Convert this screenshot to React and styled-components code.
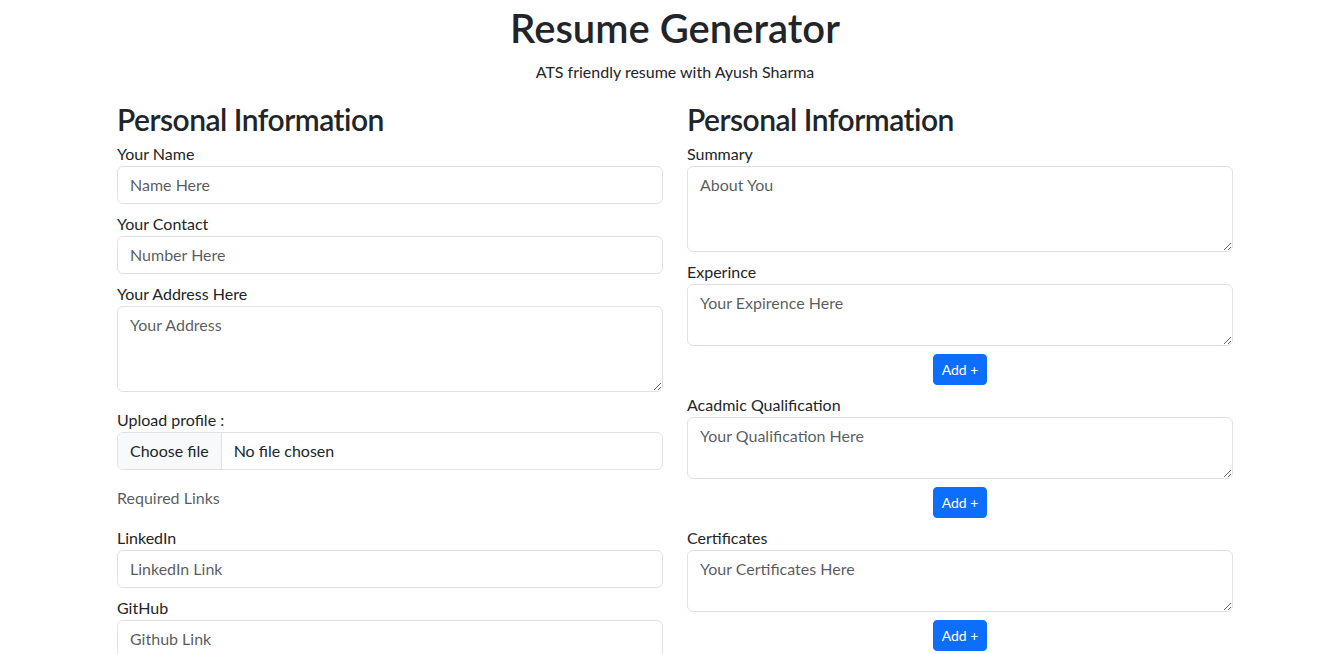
import React from 'react';
import styled, { createGlobalStyle } from 'styled-components';

const GlobalStyle = createGlobalStyle`
  body {
    margin: 0;
    background: #fff;
    color: #212529;
    font-family: "Segoe UI", Lato, "Open Sans", sans-serif;
    font-size: 16px;
    line-height: 1.5;
  }
  * { box-sizing: border-box; }
`;

const Container = styled.div`
  width: 1122px;
  margin: 0 auto;
  padding: 4px 0 0 6px;
`;

const Header = styled.header`
  text-align: center;
`;

const Title = styled.h1`
  margin: 0 0 8px;
  font-size: 40px;
  font-weight: 600;
  line-height: 1.2;
`;

const Subtitle = styled.p`
  margin: 0 0 16px;
`;

const Columns = styled.div`
  display: grid;
  grid-template-columns: 1fr 1fr;
  column-gap: 24px;
`;

const Column = styled.section`
  display: flex;
  flex-direction: column;
`;

const SectionTitle = styled.h2`
  margin: 0 0 4px;
  font-size: 30px;
  font-weight: 600;
  line-height: 38.4px;
  letter-spacing: -0.5px;
`;

const Field = styled.div`
  display: flex;
  flex-direction: column;
  margin-bottom: ${p => p.$gap || 8}px;
`;

const Label = styled.label`
  display: block;
`;

const Input = styled.input`
  display: block;
  width: 100%;
  padding: 6px 12px;
  font: inherit;
  color: #212529;
  border: 1px solid #dee2e6;
  border-radius: 6px;
  background: #fff;
  outline: none;
  &::placeholder { color: rgba(33, 37, 41, 0.75); }
`;

const TextArea = styled.textarea`
  display: block;
  width: 100%;
  padding: 6px 12px;
  font: inherit;
  color: #212529;
  border: 1px solid #dee2e6;
  border-radius: 6px;
  background: #fff;
  outline: none;
  resize: vertical;
  &::placeholder { color: rgba(33, 37, 41, 0.75); }
`;

const FileBox = styled.label`
  display: flex;
  align-items: stretch;
  height: 38px;
  border: 1px solid #dee2e6;
  border-radius: 6px;
  overflow: hidden;
  input { display: none; }
`;

const FileButton = styled.span`
  display: flex;
  align-items: center;
  padding: 0 12px;
  background: #f8f9fa;
  border-right: 1px solid #dee2e6;
`;

const FileName = styled.span`
  display: flex;
  align-items: center;
  padding: 0 12px;
`;

const Muted = styled.p`
  margin: 0 0 16px;
  color: rgba(33, 37, 41, 0.75);
`;

const AddButton = styled.button`
  align-self: center;
  margin: 0 0 8px;
  padding: 4px 8px;
  font: inherit;
  font-size: 14px;
  line-height: 1.5;
  color: #fff;
  background: #0d6efd;
  border: 1px solid #0d6efd;
  border-radius: 4px;
  cursor: pointer;
`;

const TextField = ({ label, placeholder, gap }) => (
  <Field $gap={gap}>
    <Label>{label}</Label>
    <Input type="text" placeholder={placeholder} />
  </Field>
);

const AreaField = ({ label, placeholder, rows, gap }) => (
  <Field $gap={gap}>
    <Label>{label}</Label>
    <TextArea rows={rows} placeholder={placeholder} />
  </Field>
);

export default function App() {
  return (
    <>
      <GlobalStyle />
      <Container>
        <Header>
          <Title>Resume Generator</Title>
          <Subtitle>ATS friendly resume with Ayush Sharma</Subtitle>
        </Header>
        <Columns>
          <Column>
            <SectionTitle>Personal Information</SectionTitle>
            <TextField label="Your Name" placeholder="Name Here" />
            <TextField label="Your Contact" placeholder="Number Here" />
            <AreaField label="Your Address Here" placeholder="Your Address" rows={3} gap={16} />
            <Field $gap={16}>
              <Label>Upload profile :</Label>
              <FileBox>
                <input type="file" />
                <FileButton>Choose file</FileButton>
                <FileName>No file chosen</FileName>
              </FileBox>
            </Field>
            <Muted>Required Links</Muted>
            <TextField label="LinkedIn" placeholder="LinkedIn Link" />
            <TextField label="GitHub" placeholder="Github Link" />
          </Column>
          <Column>
            <SectionTitle>Personal Information</SectionTitle>
            <AreaField label="Summary" placeholder="About You" rows={3} />
            <AreaField label="Experince" placeholder="Your Expirence Here" rows={2} />
            <AddButton type="button">Add +</AddButton>
            <AreaField label="Acadmic Qualification" placeholder="Your Qualification Here" rows={2} />
            <AddButton type="button">Add +</AddButton>
            <AreaField label="Certificates" placeholder="Your Certificates Here" rows={2} />
            <AddButton type="button">Add +</AddButton>
          </Column>
        </Columns>
      </Container>
    </>
  );
}
